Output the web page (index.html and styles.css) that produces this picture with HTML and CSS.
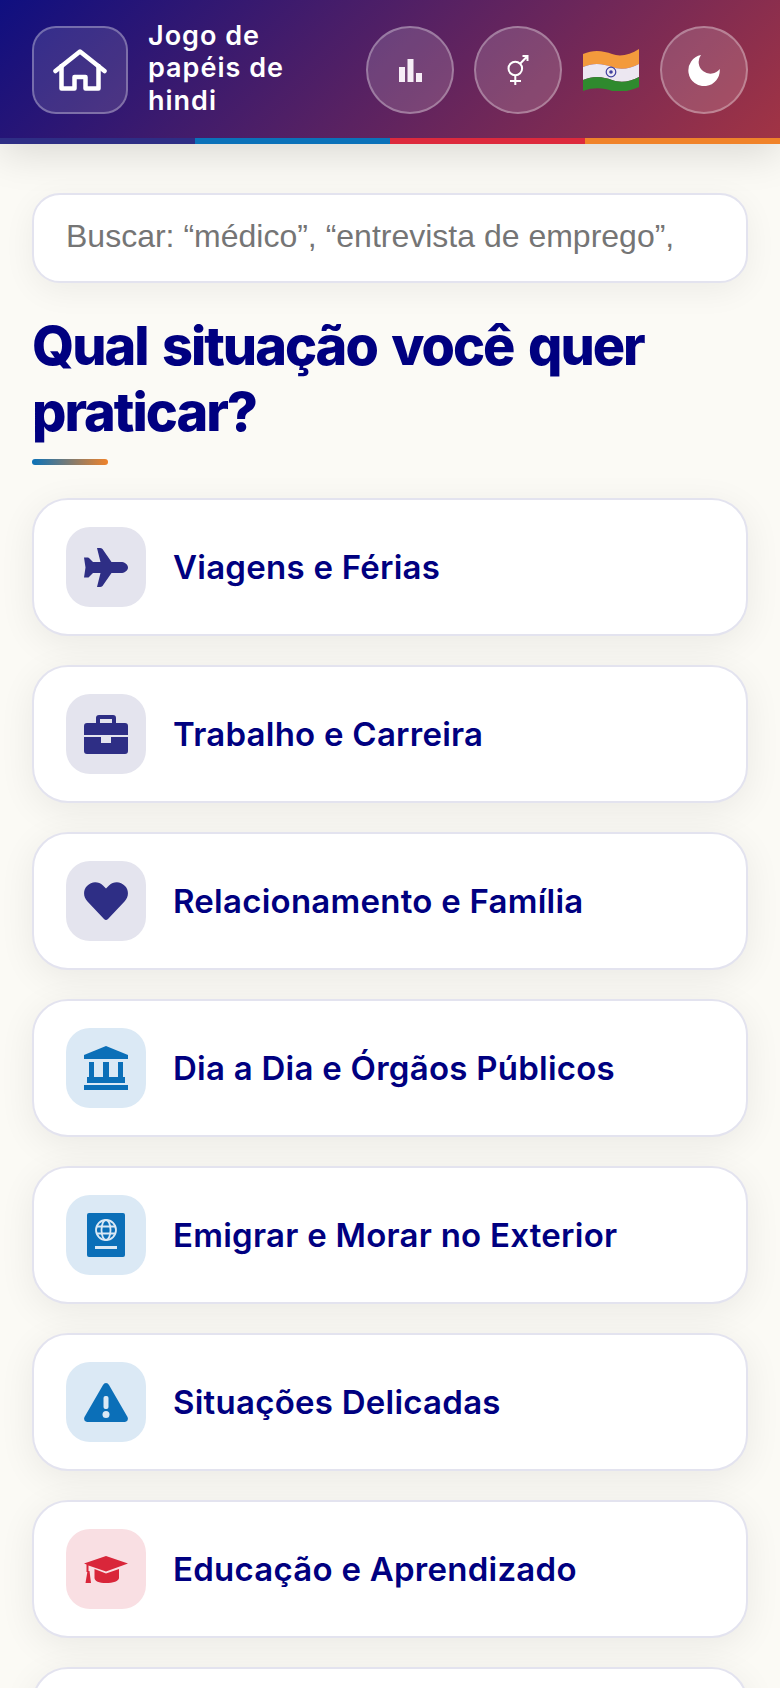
FILE: index.html
```html
<!DOCTYPE html>
<html lang="pt-BR">
<head>
    <meta charset="UTF-8">
    <title>Jogo de papéis de hindi</title>
    <link rel="stylesheet" href="styles.css">
</head>
<body>
    <header class="top-bar">
        <div class="top-row">
            <button class="home-btn" aria-label="Início">
                <svg width="54" height="42" viewBox="0 0 54 42" fill="none" stroke="#fff" stroke-width="4.500" stroke-linecap="round" stroke-linejoin="round">
                    <path d="M2.500 22 27 2.500 51.500 22"/>
                    <path d="M8.500 17V39.500H21.500V28H32.500V39.500H45.500V17"/>
                </svg>
            </button>
            <div class="app-title">Jogo de papéis de hindi</div>
            <button class="round-btn" aria-label="Estatísticas">
                <svg width="23" height="23" viewBox="0 0 23 23" fill="#f6edf6">
                    <rect x="0" y="8" width="6" height="15"/>
                    <rect x="8.500" y="0" width="6" height="23"/>
                    <rect x="17" y="14" width="6" height="9"/>
                </svg>
            </button>
            <button class="round-btn" aria-label="Gênero">
                <svg class="gender-icon" width="22" height="30" viewBox="0 0 22 30" fill="none" stroke="#fff" stroke-width="2">
                    <circle cx="8.300" cy="13.500" r="6.800"/>
                    <path d="M8.300 20.500V30M3 26H14M13.300 8.500 20.500 1M15.500 1H20.500V6"/>
                </svg>
            </button>
            <svg class="flag" width="58" height="42" viewBox="0 0 58 42">
                <path fill="#f39a3c" d="M1 5C12 0 22 2 30 5 38 8 48 6 57 0V15C48 20 38 21 30 18 22 15 12 13 1 18Z"/>
                <path fill="#ece7f1" d="M1 18C12 13 22 15 30 18 38 21 48 20 57 15V28C48 33 38 34 30 31 22 28 12 26 1 31Z"/>
                <path fill="#2f8a2e" d="M1 31C12 26 22 28 30 31 38 34 48 33 57 28V38C48 42 38 44 30 42 22 39 12 38 1 42Z"/>
                <circle cx="29" cy="23" r="4.800" fill="none" stroke="#3f3f9e" stroke-width="1.200"/>
                <circle cx="29" cy="23" r="1.800" fill="#3f3f9e"/>
            </svg>
            <button class="round-btn" aria-label="Tema">
                <svg width="32" height="32" viewBox="0 0 32 32" fill="#fff">
                    <path d="M13 1A15.700 15.700 0 1 0 31.700 15 11.500 11.500 0 0 1 13 1Z"/>
                </svg>
            </button>
        </div>
        <div class="stripe">
            <span class="stripe-navy"></span>
            <span class="stripe-blue"></span>
            <span class="stripe-red"></span>
            <span class="stripe-orange"></span>
        </div>
    </header>

    <main class="content">
        <input class="search" type="text" placeholder="Buscar: “médico”, “entrevista de emprego”,">
        <h1 class="page-title">Qual situação você quer praticar?</h1>
        <div class="title-rule"></div>

        <div class="card-list">
            <a class="card">
                <span class="card-icon navy">
                    <svg width="44" height="39" viewBox="0 0 44 39" fill="currentColor">
                        <path d="M44 19.500C44 16 40 14 37 14H27.500L18.500 1Q17.500 0 16 0H13L16.500 14H9L5 10Q4.500 9.500 4 9.500H0L1.500 19.500 0 29.500H4Q4.500 29.500 5 29L9 25H16.500L13 39H16Q17.500 39 18.500 38L27.500 25H37C40 25 44 23 44 19.500Z"/>
                    </svg>
                </span>
                <span class="card-label">Viagens e Férias</span>
            </a>
            <a class="card">
                <span class="card-icon navy">
                    <svg width="44" height="39" viewBox="0 0 44 39" fill="currentColor">
                        <path fill-rule="evenodd" d="M12 8V3Q12 0 15 0H29Q32 0 32 3V8H41Q44 8 44 11V20H0V11Q0 8 3 8ZM16 4V8H28V4Z"/>
                        <path d="M0 22H17V28H27V22H44V36Q44 39 41 39H3Q0 39 0 36Z"/>
                    </svg>
                </span>
                <span class="card-label">Trabalho e Carreira</span>
            </a>
            <a class="card">
                <span class="card-icon navy">
                    <svg width="44" height="38" viewBox="0 0 44 38" fill="currentColor">
                        <path d="M22 38Q21 38 20 37L3.500 19.500C-1 15-1 8 3 4 7.500-1 14.500-1 19 3.500L22 6.500 25 3.500C29.500-1 36.500-1 41 4 45 8 45 15 40.500 19.500L24 37Q23 38 22 38Z"/>
                    </svg>
                </span>
                <span class="card-label">Relacionamento e Família</span>
            </a>
            <a class="card">
                <span class="card-icon blue">
                    <svg width="44" height="44" viewBox="0 0 44 44" fill="currentColor">
                        <path d="M22 0 44 9V13H0V9Z"/>
                        <rect x="5" y="16" width="5" height="16"/>
                        <rect x="19" y="16" width="6" height="16"/>
                        <rect x="34" y="16" width="5" height="16"/>
                        <rect x="3" y="31" width="38" height="6"/>
                        <rect x="0" y="39" width="44" height="5"/>
                    </svg>
                </span>
                <span class="card-label">Dia a Dia e Órgãos Públicos</span>
            </a>
            <a class="card">
                <span class="card-icon blue">
                    <svg width="38" height="44" viewBox="0 0 38 44">
                        <rect width="38" height="44" rx="2" fill="currentColor"/>
                        <g fill="none" stroke="#dbe9f5" stroke-width="1.800">
                            <circle cx="19" cy="17" r="10"/>
                            <ellipse cx="19" cy="17" rx="4.500" ry="10"/>
                            <path d="M9.500 13.500H28.500M9.500 20.500H28.500"/>
                        </g>
                        <rect x="8" y="33" width="22" height="3" fill="#dbe9f5"/>
                    </svg>
                </span>
                <span class="card-label">Emigrar e Morar no Exterior</span>
            </a>
            <a class="card">
                <span class="card-icon blue">
                    <svg width="44" height="39" viewBox="0 0 44 39">
                        <path fill="currentColor" d="M22 0Q24 0 25 2L43.500 34Q45 38 41 39H3Q-1 38 .5 34L19 2Q20 0 22 0Z"/>
                        <rect x="19.500" y="13" width="5" height="13" rx="2" fill="#dbe9f5"/>
                        <circle cx="22" cy="31.500" r="3.500" fill="#dbe9f5"/>
                    </svg>
                </span>
                <span class="card-label">Situações Delicadas</span>
            </a>
            <a class="card">
                <span class="card-icon red">
                    <svg width="44" height="27" viewBox="0 0 44 27" fill="currentColor">
                        <path d="M22 0 44 7.500 22 15.500 4.500 9.500V16H2.500V8.500L0 7.500Z"/>
                        <path d="M1.500 27 3.500 15 5.500 15 7 27Z"/>
                        <path d="M10.500 13 22 17.500 35 13V22C35 25 29 27 22 27S10.500 25 10.500 22Z"/>
                    </svg>
                </span>
                <span class="card-label">Educação e Aprendizado</span>
            </a>
            <a class="card">
                <span class="card-icon"></span>
                <span class="card-label"></span>
            </a>
        </div>
    </main>
</body>
</html>
```

FILE: styles.css
```css
html, body {
    height: 100%;
    margin: 0;
    padding: 0;
}
body {
    height: 1688px;
    overflow: hidden;
    background: #fbfaf5;
    font-family: Inter, "Liberation Sans", sans-serif;
    color: #000080;
}
button {
    padding: 0;
    cursor: pointer;
    font: inherit;
}
/* Header */
.top-bar {
    background: linear-gradient(135deg, #0f0f80 0%, #a23444 100%);
    box-shadow: 0 8px 40px rgba(0, 0, 0, 0.14);
}
.top-row {
    height: 138px;
    box-sizing: border-box;
    display: flex;
    align-items: center;
    padding: 2px 32px 0;
}
.home-btn {
    width: 96px;
    height: 88px;
    flex: none;
    display: flex;
    align-items: center;
    justify-content: center;
    background: rgba(255, 255, 255, 0.12);
    border: 2px solid rgba(255, 255, 255, 0.3);
    border-radius: 24px;
}
.app-title {
    width: 150px;
    margin: 0 auto 3px 20px;
    color: #fff;
    font-size: 27px;
    font-weight: 600;
    line-height: 32.500px;
    letter-spacing: 1px;
}
.round-btn {
    width: 88px;
    height: 88px;
    flex: none;
    display: flex;
    align-items: center;
    justify-content: center;
    background: rgba(255, 255, 255, 0.15);
    border: 2px solid rgba(255, 255, 255, 0.3);
    border-radius: 50%;
    margin-left: 20px;
}
.flag {
    flex: none;
    margin-left: 20px;
}
.stripe {
    display: flex;
    height: 6px;
}
.stripe span {
    flex: 1;
}
.stripe-navy { background: #2e2e85; }
.stripe-blue { background: #0b72b9; }
.stripe-red { background: #dd2a3d; }
.stripe-orange { background: #f0832a; }
/* Main content */
.content {
    padding: 49px 32px 0;
}
.search {
    display: block;
    width: 100%;
    height: 90px;
    box-sizing: border-box;
    padding: 0 32px 4px;
    background: #fff;
    border: 2px solid #e3e3ef;
    border-radius: 28px;
    box-shadow: 0 8px 32px rgba(0, 0, 0, 0.06);
    font-family: "Liberation Sans", Arial, sans-serif;
    font-size: 32px;
    outline: none;
}
.search::placeholder {
    color: #757575;
    opacity: 1;
}
.page-title {
    margin: 30px 0 0;
    font-size: 54px;
    font-weight: 800;
    line-height: 66px;
    letter-spacing: -2px;
    word-spacing: 4.600px;
    color: #000080;
}
.title-rule {
    width: 76px;
    height: 6px;
    margin-top: 14px;
    border-radius: 3px;
    background: linear-gradient(90deg, #0b72b9, #f0832a);
}
.card-list {
    display: flex;
    flex-direction: column;
    gap: 29px;
    margin-top: 33px;
}
.card {
    height: 138px;
    flex: none;
    box-sizing: border-box;
    display: flex;
    align-items: center;
    gap: 27px;
    padding: 0 32px;
    background: #fff;
    border: 2px solid #e3e3ef;
    border-radius: 36px;
    box-shadow: 0 8px 36px rgba(0, 0, 0, 0.07);
}
.card-icon {
    width: 80px;
    height: 80px;
    flex: none;
    display: flex;
    align-items: center;
    justify-content: center;
    border-radius: 24px;
}
.card-icon.navy {
    background: #e4e4ee;
    color: #2e2e85;
}
.card-icon.blue {
    background: #dbe9f5;
    color: #0b6fb8;
}
.card-icon.red {
    background: #f9dfe3;
    color: #d9263a;
}
.card-label {
    font-size: 33px;
    font-weight: 600;
    letter-spacing: 0.250px;
    color: #000080;
}
```
